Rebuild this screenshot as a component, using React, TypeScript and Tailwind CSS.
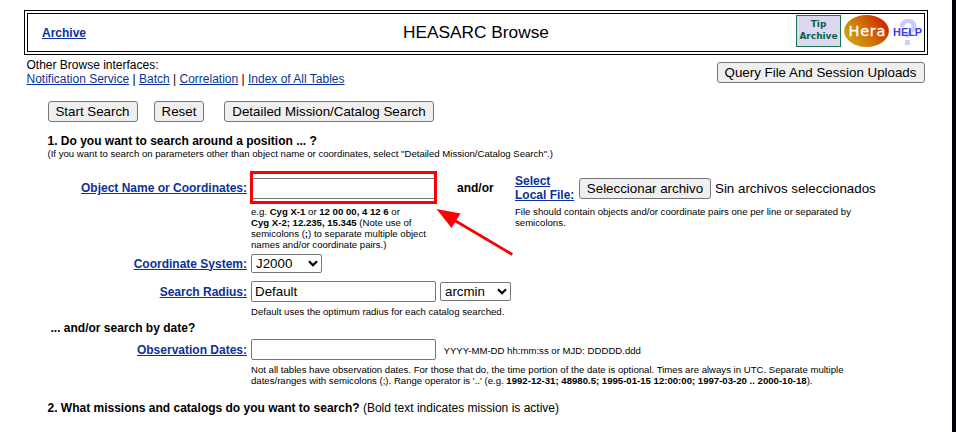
import React from "react";

function Link({ children, bold = false }: { children: React.ReactNode; bold?: boolean }) {
  return (
    <a href="#" className={`text-[#0b3299] underline ${bold ? "font-bold" : ""}`}>
      {children}
    </a>
  );
}

function Button({ children, className }: { children: React.ReactNode; className: string }) {
  return (
    <button
      type="button"
      className={`h-[21px] shrink-0 rounded-[3px] border border-[#767676] bg-[#efefef] text-center text-[13.333px] leading-[19px] whitespace-nowrap text-black ${className}`}
    >
      {children}
    </button>
  );
}

function TextField({ value = "" }: { value?: string }) {
  return (
    <input
      type="text"
      defaultValue={value}
      className="h-[21px] w-[185px] rounded-[2px] border border-[#767676] bg-white px-[3px] text-[13.333px] text-black"
    />
  );
}

function Select({ value }: { value: string }) {
  return (
    <div className="flex h-[19px] w-[71px] items-center justify-between rounded-[2px] border border-[#767676] bg-white pr-[3px] pl-[4px] text-[13.333px] leading-[17px] text-black">
      <span>{value}</span>
      <svg width="10" height="7" viewBox="0 0 10 7" fill="none">
        <path d="M1 1.2L5 5.2L9 1.2" stroke="#000" strokeWidth="2.2" />
      </svg>
    </div>
  );
}

function Label({ children }: { children: React.ReactNode }) {
  return (
    <div className="mr-[4px] w-[247px] shrink-0 text-right">
      <Link bold>{children}</Link>
    </div>
  );
}

function TipArchive() {
  return (
    <div className="flex h-[32px] w-[45px] flex-col items-center justify-center border border-[#1b7350] bg-[#dcd8f0] pb-[2px] font-['DejaVu_Sans','Verdana',sans-serif] text-[9px] leading-[12px] font-bold text-[#0b6143]">
      <span>Tip</span>
      <span className="text-[9px]">Archive</span>
    </div>
  );
}

function Hera() {
  return (
    <svg width="45" height="32" viewBox="0 0 45 32" className="ml-[3px]">
      <defs>
        <linearGradient id="hera" x1="0" y1="0.75" x2="1" y2="0.25">
          <stop offset="0" stopColor="#d0a80c" />
          <stop offset="0.5" stopColor="#cf7006" />
          <stop offset="1" stopColor="#d01c04" />
        </linearGradient>
      </defs>
      <ellipse cx="22.5" cy="16" rx="22.4" ry="15.9" fill="url(#hera)" />
      <text x="23" y="21" textAnchor="middle" fontFamily="DejaVu Sans, sans-serif" fontSize="14.5" textLength="37" lengthAdjust="spacing" fill="#fff" stroke="#fff" strokeWidth="0.35">
        Hera
      </text>
    </svg>
  );
}

function Help() {
  return (
    <svg width="30" height="32" viewBox="0 0 30 32" className="ml-[4px] overflow-visible">
      <text x="15" y="29.5" textAnchor="middle" fontFamily="Liberation Sans, Arial, sans-serif" fontWeight="bold" fontSize="36" textLength="20" lengthAdjust="spacingAndGlyphs" fill="#ccccfa">
        ?
      </text>
      <text x="14.6" y="21.3" textAnchor="middle" fontFamily="Liberation Sans, Arial, sans-serif" fontWeight="bold" fontSize="11" textLength="29" lengthAdjust="spacingAndGlyphs" fill="#4038fa">
        HELP
      </text>
    </svg>
  );
}

export default function App() {
  return (
    <div className="flex h-[432px] w-[956px] overflow-hidden bg-white font-['Liberation_Sans',Arial,sans-serif] text-[12px] leading-[14px] text-black">
      <main className="relative w-[952px] shrink-0 pt-[10px]">
        <header className="ml-[24px] grid h-[45px] w-[904px] grid-cols-[1fr_auto_1fr] items-center border-4 border-double border-black">
          <div className="pl-[14px]">
            <Link bold>Archive</Link>
          </div>
          <h1 className="pb-[2px] text-[17.28px] leading-[20px]">HEASARC Browse</h1>
          <div className="flex justify-end pr-[1px] pb-[4px]">
            <TipArchive />
            <Hera />
            <Help />
          </div>
        </header>

        <section className="mt-[3px] ml-[26.5px] flex h-[28px] w-[898.5px] justify-between">
          <div>
            <p>Other Browse interfaces:</p>
            <p>
              <Link>Notification Service</Link> | <Link>Batch</Link> | <Link>Correlation</Link> |{" "}
              <Link>Index of All Tables</Link>
            </p>
          </div>
          <Button className="mt-[4px] w-[208px] pr-[1px]">Query File And Session Uploads</Button>
        </section>

        <div className="mt-[15px] ml-[48px] flex">
          <Button className="w-[90px] pr-[1px]">Start Search</Button>
          <Button className="ml-[16px] w-[50px]">Reset</Button>
          <Button className="ml-[20px] w-[210px]">Detailed Mission/Catalog Search</Button>
        </div>

        <h2 className="mt-[12px] ml-[47.5px] font-bold">1. Do you want to search around a position ... ?</h2>
        <p className="ml-[47.5px] text-[9.6px] leading-[11px]">
          (If you want to search on parameters other than object name or coordinates, select "Detailed Mission/Catalog Search".)
        </p>

        <div className="mt-[15px] flex h-[28px] items-center">
          <Label>Object Name or Coordinates:</Label>
          <div className="relative">
            <TextField />
            <div className="absolute -top-[7px] -left-[1px] h-[33px] w-[187px] border-3 border-[#fb0007]" />
          </div>
          <span className="ml-[21px] w-[58px] font-bold">and/or</span>
          <div className="w-[64px]">
            <Link bold>
              Select
              <br />
              Local File:
            </Link>
          </div>
          <Button className="w-[132px]">Seleccionar archivo</Button>
          <span className="mt-[2px] ml-[4px] text-[13.333px]">Sin archivos seleccionados</span>
        </div>
        <div className="mt-[4px] ml-[251px] flex h-[44px] text-[9.6px] leading-[11px]">
          <p className="w-[264px]">
            e.g. <b>Cyg X-1</b> or <b>12 00 00, 4 12 6</b> or
            <br />
            <b>Cyg X-2; 12.235, 15.345</b> (Note use of
            <br />
            semicolons (<b>;</b>) to separate multiple object
            <br />
            names and/or coordinate pairs.)
          </p>
          <p>
            File should contain objects and/or coordinate pairs one per line or separated by
            <br />
            semicolons.
          </p>
        </div>

        <div className="mt-[4px] flex h-[19px] items-center">
          <Label>Coordinate System:</Label>
          <Select value="J2000" />
        </div>

        <div className="mt-[8px] flex h-[21px] items-center">
          <Label>Search Radius:</Label>
          <TextField value="Default" />
          <div className="ml-[4px]">
            <Select value="arcmin" />
          </div>
        </div>
        <p className="mt-[4px] ml-[251px] text-[9.6px] leading-[11px]">
          Default uses the optimum radius for each catalog searched.
        </p>

        <h3 className="mt-[4px] ml-[50.5px] font-bold">... and/or search by date?</h3>
        <div className="mt-[4px] flex h-[21px] items-center">
          <Label>Observation Dates:</Label>
          <TextField />
          <span className="mt-[2px] ml-[7.5px] text-[9.6px] leading-[11px]">YYYY-MM-DD hh:mm:ss or MJD: DDDDD.ddd</span>
        </div>
        <p className="mt-[4px] ml-[251px] text-[9.6px] leading-[11px]">
          Not all tables have observation dates. For those that do, the time portion of the date is optional. Times are always in UTC. Separate multiple
          <br />
          dates/ranges with semicolons (;). Range operator is '..' (e.g.{" "}
          <b>1992-12-31; 48980.5; 1995-01-15 12:00:00; 1997-03-20 .. 2000-10-18</b>).
        </p>

        <h2 className="mt-[15px] ml-[47.5px]">
          <b>2. What missions and catalogs do you want to search?</b> (Bold text indicates mission is active)
        </h2>

        <svg className="absolute top-[200px] left-[430px]" width="90" height="60" viewBox="0 0 90 60">
          <path d="M82.3 54.5L24 20" stroke="#fb0007" strokeWidth="2.8" />
          <path d="M6.5 9L30.5 13.5L21.5 28Z" fill="#fb0007" />
        </svg>
      </main>
      <aside className="w-[4px] shrink-0 bg-[#030208]" />
    </div>
  );
}
